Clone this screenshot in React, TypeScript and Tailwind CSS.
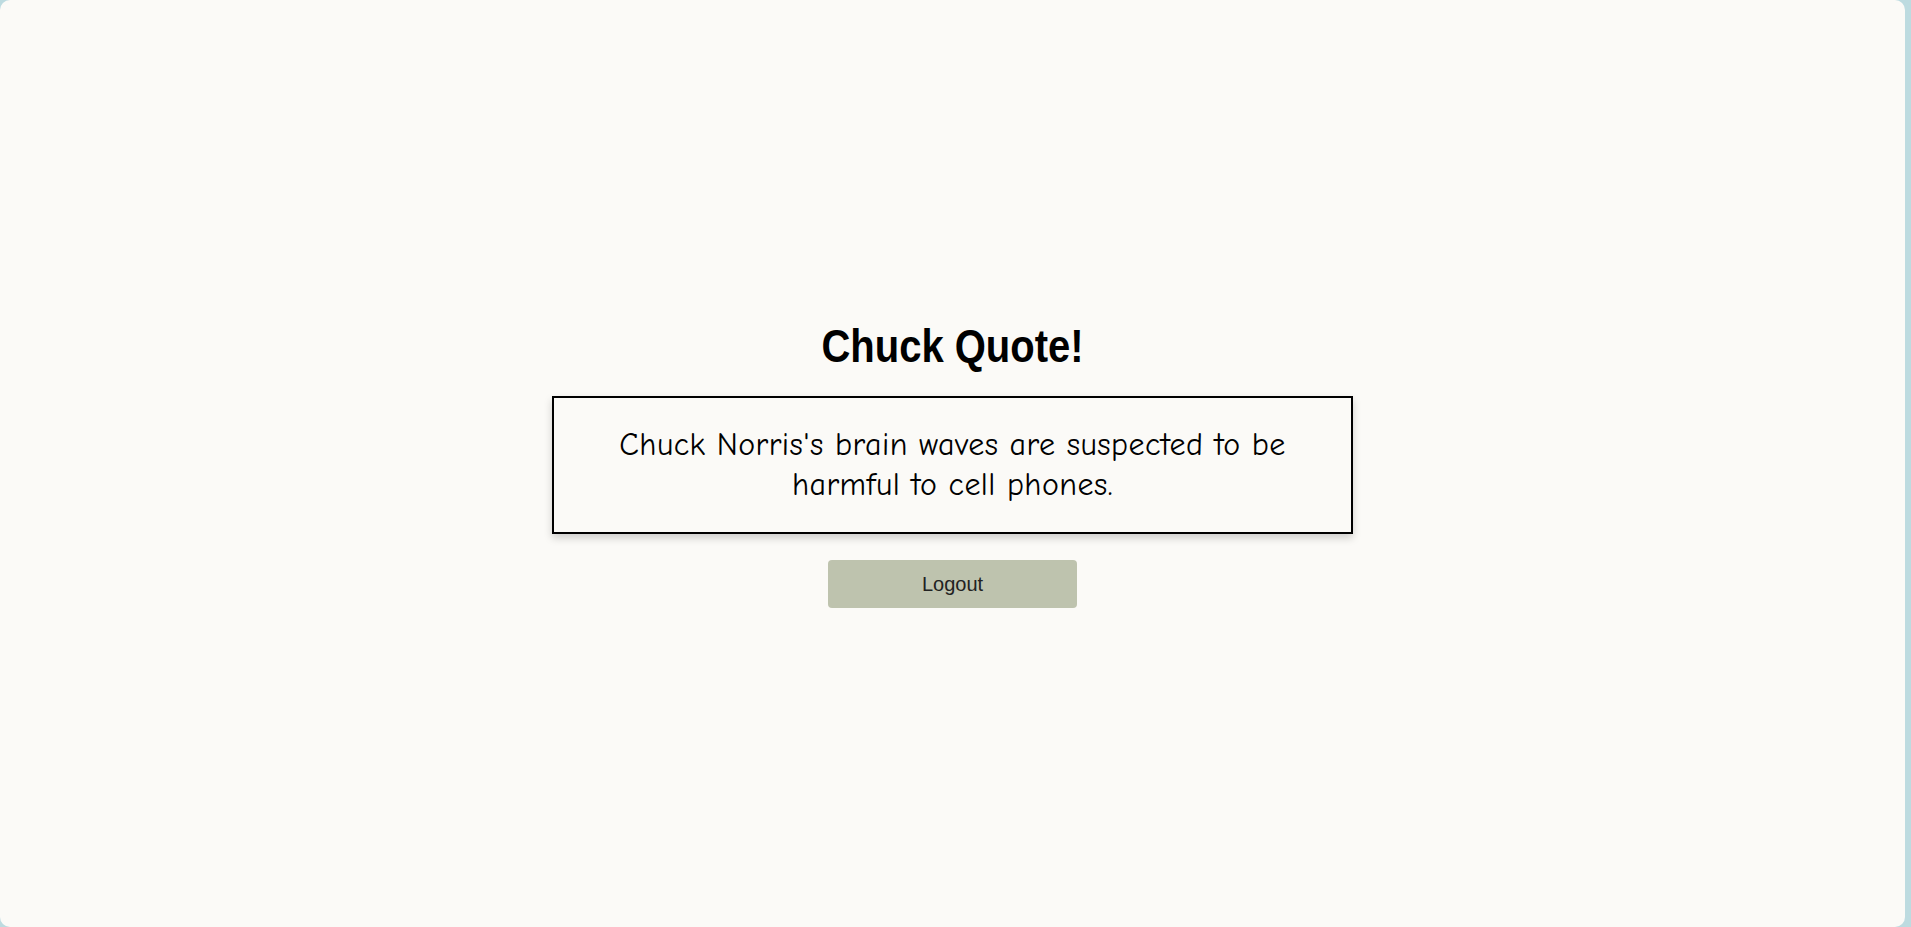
const quote = "Chuck Norris's brain waves are suspected to be harmful to cell phones.";

const App = () => {
  return (
    <div className="h-[927px] w-full overflow-hidden bg-[#bddbe0]">
      <div className="flex h-full w-[1905px] flex-col items-center justify-center rounded-[10px] bg-[#fbfaf7] pt-[3px]">
        <h1 className="scale-y-[1.15] text-[40px] leading-[46px] font-bold text-black font-['Liberation_Sans',Arial,sans-serif]">
          Chuck Quote!
        </h1>
        <div className="mt-[27px] w-[801px] border-2 border-black px-[40px] py-[27px] text-center shadow-[0_4px_8px_rgba(0,0,0,0.18)]">
          <p className="text-[32px] leading-[40px] tracking-[0.45px] text-black font-['Comic_Sans_MS','Comic_Neue','DejaVu_Sans',cursive]">
            {quote}
          </p>
        </div>
        <button
          type="button"
          className="mt-[26px] h-[48px] w-[249px] rounded-[4px] bg-[#bec3ae] text-[20px] text-[#222] font-['Liberation_Sans',Arial,sans-serif]"
        >
          Logout
        </button>
      </div>
    </div>
  );
};

export default App;
